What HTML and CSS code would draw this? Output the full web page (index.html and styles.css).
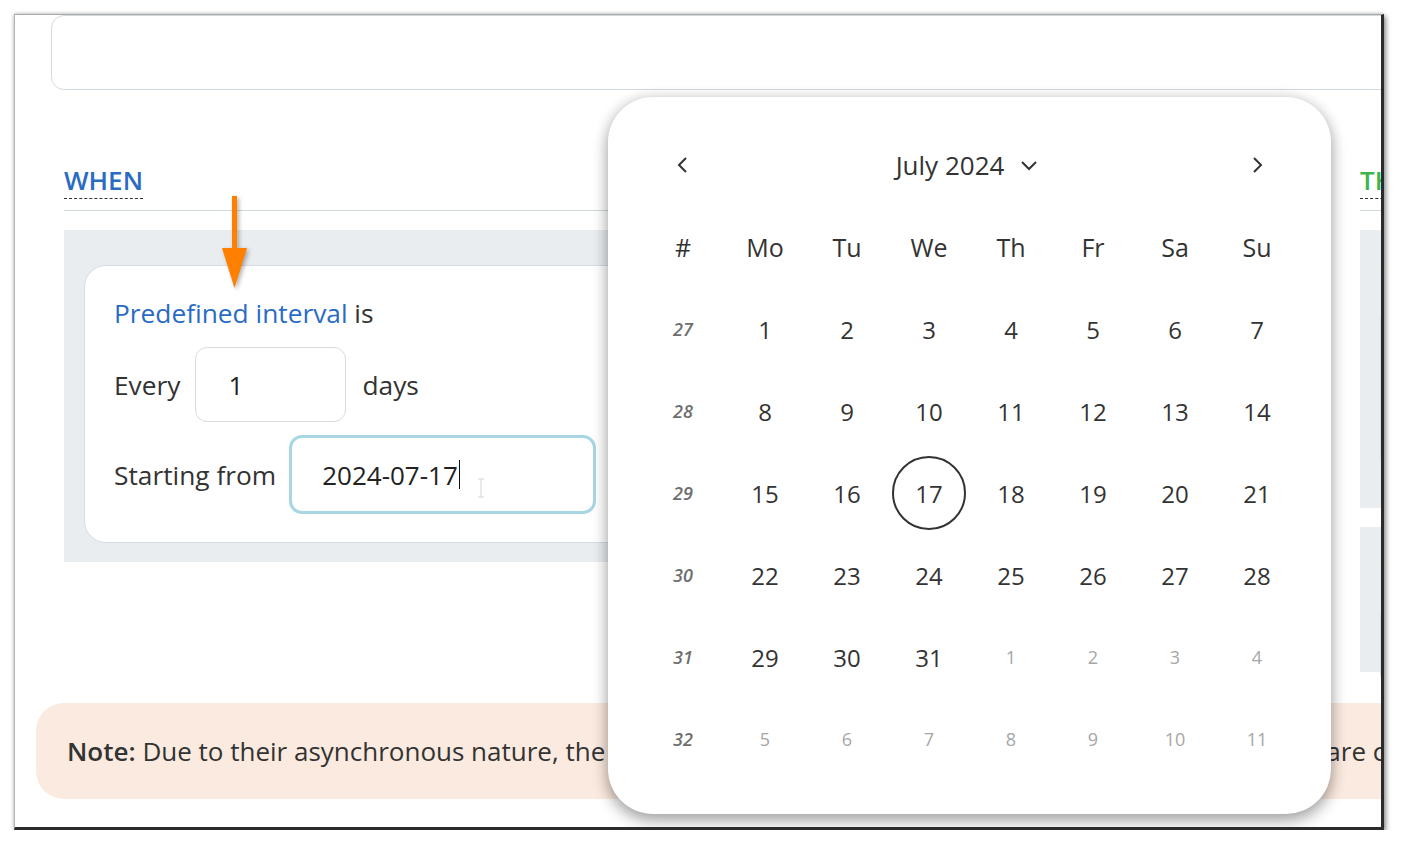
FILE: index.html
```html
<!DOCTYPE html>
<html lang="en">
<head>
<meta charset="utf-8">
<title>Trigger</title>
<link rel="stylesheet" href="styles.css">
</head>
<body>
<div class="frame">
  <div class="topbox"></div>

  <div class="columns">
    <section class="col col-when">
      <div class="sec-head"><span class="sec-title when">WHEN</span></div>
      <div class="panel panel-when">
        <div class="card">
          <div class="row title-row"><span class="link">Predefined interval</span>&nbsp;is</div>
          <div class="row"><span>Every</span><div class="input small">1</div><span>days</span></div>
          <div class="row"><span>Starting from</span><div class="input date">2024-07-17<span class="caret"></span></div></div>
        </div>
      </div>
    </section>
    <section class="col col-then">
      <div class="sec-head"><span class="sec-title then">THEN</span></div>
      <div class="panel panel-then1">
        <div class="ptext">Create</div>
        <div class="card card-then1"></div>
      </div>
      <div class="panel panel-then2">
        <div class="ptext">Create</div>
        <div class="card card-then2"></div>
      </div>
    </section>
  </div>

  <div class="note"><b>Note:</b> Due to their asynchronous nature, the scheduled triggers of this workflow and all their conditions are checked periodically.</div>

  <svg class="ibeam" width="8" height="20" viewBox="0 0 8 20"><path d="M1 1h6M4 1v18M1 19h6" fill="none" stroke="#d4d4d4" stroke-width="1"/></svg>

  <svg class="arrow" width="30" height="100" viewBox="0 0 30 100">
    <rect x="10" y="0" width="5" height="56" fill="#ff7f00"/>
    <path d="M0 52 L25 52 L12.5 92 Z" fill="#ff7f00"/>
  </svg>

  <div class="popover">
    <div class="cal-head">
      <div class="nav"><svg width="14" height="20" viewBox="0 0 14 20"><path d="M10 3 L3 10 L10 17" fill="none" stroke="#333" stroke-width="2"/></svg></div>
      <div class="month">July 2024 <svg width="18" height="12" viewBox="0 0 18 12"><path d="M2 3 L9 10 L16 3" fill="none" stroke="#333" stroke-width="2"/></svg></div>
      <div class="nav"><svg width="14" height="20" viewBox="0 0 14 20"><path d="M4 3 L11 10 L4 17" fill="none" stroke="#333" stroke-width="2"/></svg></div>
    </div>
    <div class="cal-grid">
      <div class="wd">#</div><div class="wd">Mo</div><div class="wd">Tu</div><div class="wd">We</div><div class="wd">Th</div><div class="wd">Fr</div><div class="wd">Sa</div><div class="wd">Su</div>

      <div class="wk">27</div><div class="d">1</div><div class="d">2</div><div class="d">3</div><div class="d">4</div><div class="d">5</div><div class="d">6</div><div class="d">7</div>
      <div class="wk">28</div><div class="d">8</div><div class="d">9</div><div class="d">10</div><div class="d">11</div><div class="d">12</div><div class="d">13</div><div class="d">14</div>
      <div class="wk">29</div><div class="d">15</div><div class="d">16</div><div class="d sel">17</div><div class="d">18</div><div class="d">19</div><div class="d">20</div><div class="d">21</div>
      <div class="wk">30</div><div class="d">22</div><div class="d">23</div><div class="d">24</div><div class="d">25</div><div class="d">26</div><div class="d">27</div><div class="d">28</div>
      <div class="wk">31</div><div class="d">29</div><div class="d">30</div><div class="d">31</div><div class="d o">1</div><div class="d o">2</div><div class="d o">3</div><div class="d o">4</div>
      <div class="wk">32</div><div class="d o">5</div><div class="d o">6</div><div class="d o">7</div><div class="d o">8</div><div class="d o">9</div><div class="d o">10</div><div class="d o">11</div>
    </div>
  </div>
</div>
</body>
</html>
```

FILE: styles.css
```css
* { box-sizing: border-box; }

html, body {
  margin: 0;
  padding: 0;
  background: #ffffff;
  font-family: "Open Sans", "Noto Sans", "Liberation Sans", sans-serif;
  color: #333333;
}

.frame {
  position: relative;
  margin: 14px 0 0 14px;
  width: 1370px;
  height: 816px;
  border-top: 1px solid #a9a9a9;
  border-left: 1px solid #b3b3b3;
  border-right: 3px solid #2b2b2b;
  border-bottom: 3px solid #2b2b2b;
  background: #ffffff;
  overflow: hidden;
  box-shadow: 2px 2px 5px rgba(0, 0, 0, 0.45), -1px -1px 3px rgba(0, 0, 0, 0.12);
}

.topbox {
  margin-left: 36px;
  width: 1400px;
  height: 75px;
  border: 1px solid #d3dadf;
  border-radius: 13px;
}

.columns {
  display: flex;
  align-items: flex-start;
  gap: 36px;
  margin: 73px 0 0 49px;
}

.col-when { width: 1260px; flex: none; }
.col-then { width: 300px; flex: none; }

.sec-head {
  display: flex;
  padding-bottom: 11px;
  border-bottom: 1px solid #cfd8dc;
}

.sec-title {
  font-size: 26px;
  line-height: 35px;
  font-weight: 600;
  border-bottom: 1px dashed #333;
}
.sec-title.when { color: #2a6bc3; }
.sec-title.then { color: #3db54b; }

.panel {
  margin-top: 19px;
  background: #e9edf0;
}

.panel-when { padding: 35px 20px 19px; }

.card {
  background: #ffffff;
  border: 1px solid #d6dde2;
  border-radius: 22px;
}

.panel-when .card { padding: 29px 29px 28px; }

.row {
  display: flex;
  align-items: center;
  font-size: 26.3px;
  color: #333;
}

.title-row { line-height: 36px; }
.link { color: #2a6bc3; }

.row + .row { margin-top: 16px; }
.row + .row + .row { margin-top: 13px; }

.input {
  display: flex;
  align-items: center;
  background: #fff;
  color: #222;
  font-size: 26px;
}

.input.small {
  width: 151px;
  height: 75px;
  margin: 0 16px 0 15px;
  padding-left: 32px;
  border: 1px solid #d6dde2;
  border-radius: 12px;
}

.input.date {
  width: 307px;
  height: 79px;
  margin-left: 13px;
  padding-left: 30px;
  border: 3px solid #a9d6e3;
  border-radius: 13px;
}

.caret {
  display: inline-block;
  width: 1px;
  height: 29px;
  margin-left: 1px;
  background: #111;
}

.panel-then1 { height: 278px; padding: 20px 20px 0; }
.panel-then2 { height: 145px; padding: 20px 20px 0; }

.ptext { font-size: 24px; line-height: 32px; color: #333; }
.card-then1 { height: 180px; margin-top: 16px; }
.card-then2 { height: 100px; margin-top: 16px; }

.note {
  margin: 31px 0 0 21px;
  width: 1500px;
  height: 96px;
  padding-left: 31px;
  background: #fbeadf;
  border-radius: 28px;
  font-size: 26px;
  line-height: 96px;
  white-space: nowrap;
  color: #333;
}
.note b { font-weight: 600; }

.ibeam {
  position: absolute;
  left: 462px;
  top: 463px;
}

.arrow {
  position: absolute;
  left: 207px;
  top: 181px;
  filter: drop-shadow(2px 2px 2px rgba(0, 0, 0, 0.3));
}

.popover {
  position: absolute;
  left: 593px;
  top: 82px;
  width: 723px;
  height: 717px;
  padding: 27px 33px 34px 34px;
  background: #fff;
  border-radius: 45px;
  box-shadow: 0 7px 16px rgba(0, 0, 0, 0.32), 0 0 14px rgba(0, 0, 0, 0.12);
}

.cal-head {
  display: flex;
  align-items: center;
  justify-content: space-between;
  height: 82px;
}

.nav {
  width: 82px;
  display: flex;
  justify-content: center;
}

.month {
  display: flex;
  align-items: center;
  gap: 16px;
  font-size: 26px;
  color: #333;
  margin-right: 6px;
}

.cal-grid {
  display: grid;
  grid-template-columns: repeat(8, 82px);
  grid-auto-rows: 82px;
  align-items: center;
  justify-items: center;
}

.wd { font-size: 25px; color: #333; }
.wk { font-size: 18px; font-style: italic; font-weight: 600; color: #6e6e6e; }
.d { font-size: 24px; color: #333; display: flex; align-items: center; justify-content: center; width: 74px; height: 74px; }
.d.o { font-size: 18px; color: #a6a6a6; }
.d.sel { border: 2px solid #333; border-radius: 50%; }
```
